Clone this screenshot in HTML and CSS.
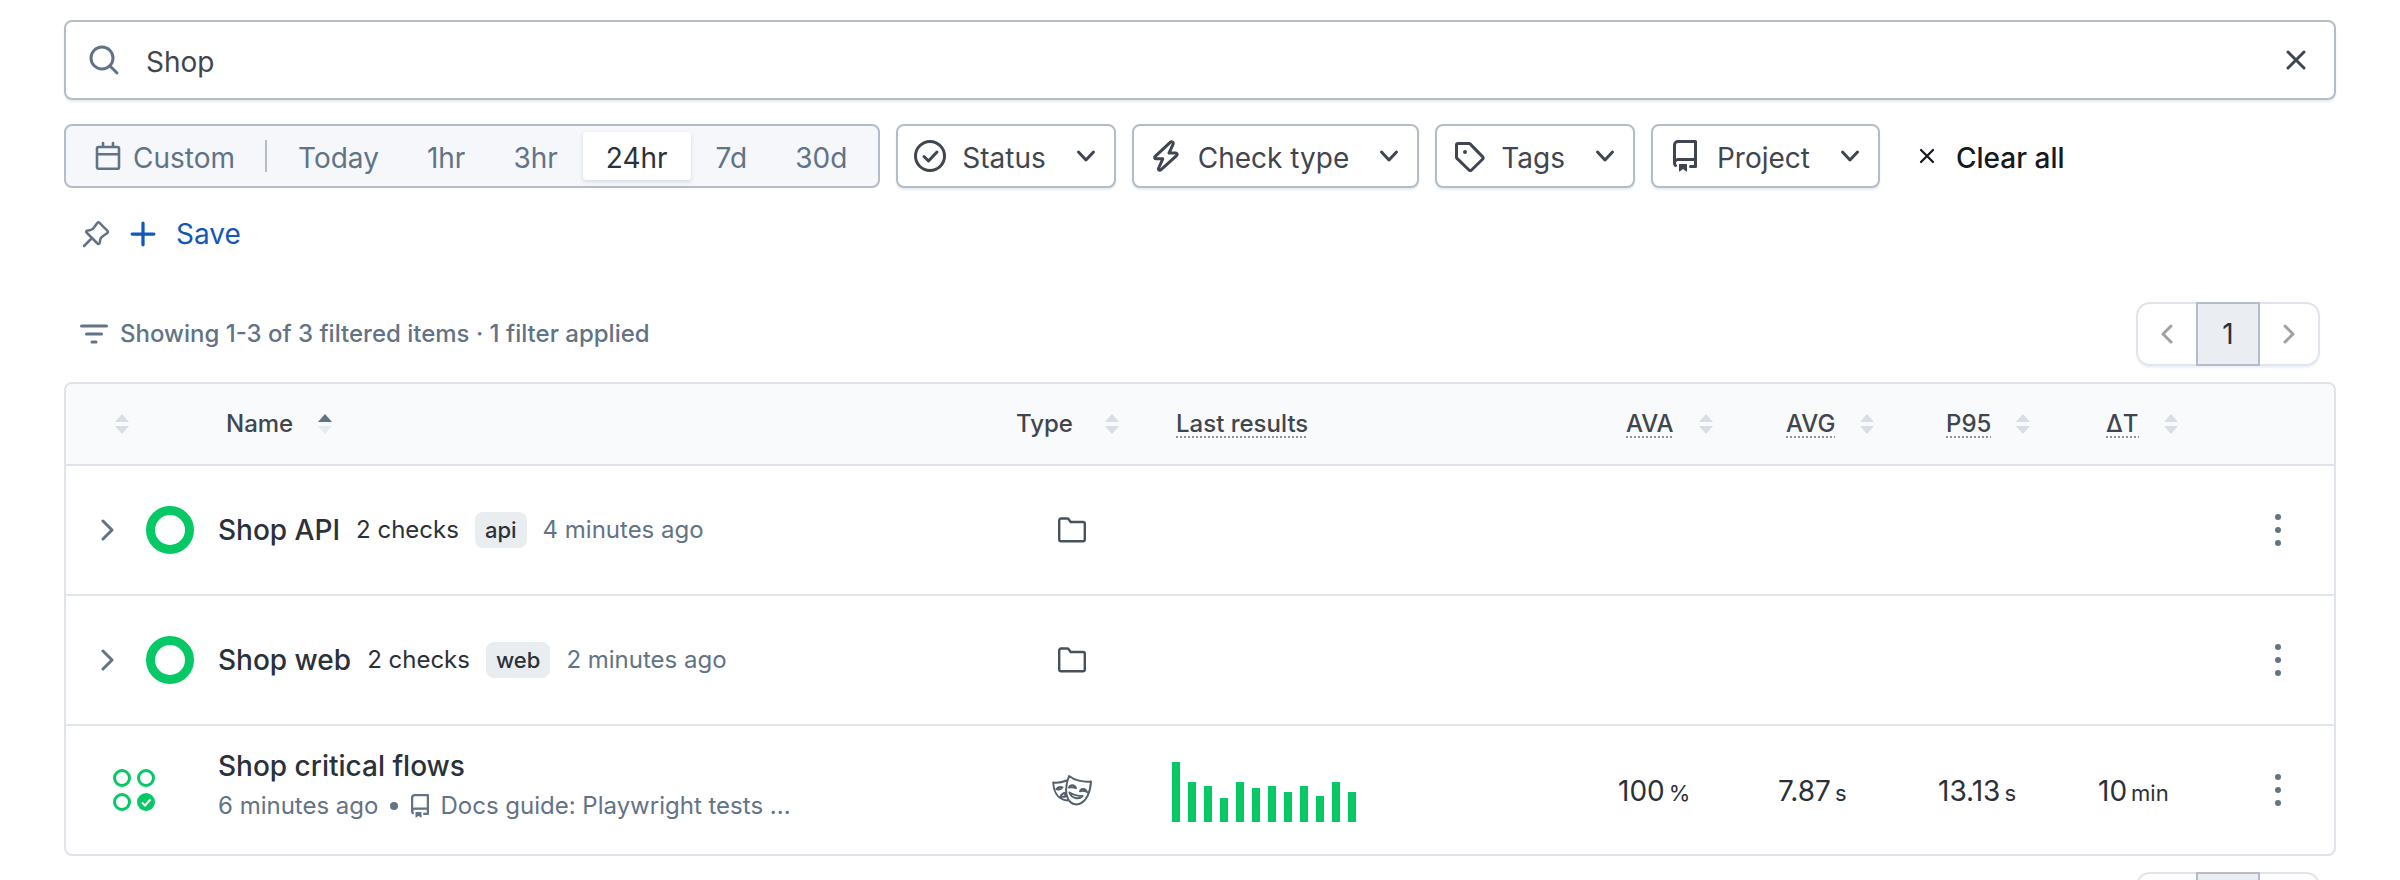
FILE: index.html
```html
<!DOCTYPE html>
<html lang="en">
<head>
<meta charset="utf-8">
<title>Checks</title>
<link rel="stylesheet" href="styles.css">
</head>
<body>
<svg class="defs" aria-hidden="true">
  <symbol id="repo" viewBox="0 0 16 16"><path fill="currentColor" d="M2 2.5A2.5 2.5 0 0 1 4.5 0h8.75a.75.75 0 0 1 .75.75v12.5a.75.75 0 0 1-.75.75h-2.5a.75.75 0 0 1 0-1.5h1.75v-2h-8a1 1 0 0 0-.714 1.7.75.75 0 1 1-1.072 1.05A2.495 2.495 0 0 1 2 11.5Zm10.5-1h-8a1 1 0 0 0-1 1v6.708A2.486 2.486 0 0 1 4.5 9h8ZM5 12.25a.25.25 0 0 1 .25-.25h3.5a.25.25 0 0 1 .25.25v3.25a.25.25 0 0 1-.4.2l-1.45-1.087a.249.249 0 0 0-.3 0L5.4 15.7a.25.25 0 0 1-.4-.2Z"/></symbol>
  <symbol id="down" viewBox="0 0 32 32"><path d="M8.500 12l7.500 8 7.500-8"/></symbol>
  <symbol id="cross" viewBox="0 0 24 24"><path d="M4 4l16 16M20 4L4 20"/></symbol>
  <symbol id="sort" viewBox="0 0 14 20"><path class="up" d="M7 0L14 8H0z"/><path class="dn" d="M7 20L14 12H0z"/></symbol>
  <symbol id="folder" viewBox="0 0 32 32"><path d="M3.200 25.500V6.300a1.800 1.800 0 0 1 1.800-1.800h6.200c.6 0 1.100.3 1.500.8l1.900 2.700h12.400a1.800 1.800 0 0 1 1.800 1.800V25.500a1.800 1.800 0 0 1-1.800 1.800H5a1.800 1.800 0 0 1-1.800-1.800z"/></symbol>
  <symbol id="dots" viewBox="0 0 8 32"><circle cx="4" cy="3" r="3"/><circle cx="4" cy="16" r="3"/><circle cx="4" cy="29" r="3"/></symbol>
</svg>
<main class="page">
  <form class="search" role="search">
    <svg class="ico search-ico" viewBox="0 0 32 32"><circle cx="14" cy="14" r="11"/><path d="M22 22l7 7"/></svg>
    <input type="text" value="Shop" aria-label="Search checks">
    <button type="button" class="plain" aria-label="Clear search"><svg class="ico clear-ico"><use href="#cross"/></svg></button>
  </form>

  <div class="filters">
    <div class="range" role="group" aria-label="Time range">
      <button type="button" class="seg custom"><svg class="ico cal-ico" viewBox="0 0 26 32"><path d="M3.500 7h19c.8 0 1.500.7 1.500 1.500v18.700c0 .8-.7 1.500-1.500 1.500h-19c-.8 0-1.500-.7-1.500-1.500V8.500C2 7.700 2.700 7 3.500 7zM2 14.200h22M8 3v4M18 3v4"/></svg>Custom</button>
      <span class="divider"></span>
      <button type="button" class="seg">Today</button>
      <button type="button" class="seg">1hr</button>
      <button type="button" class="seg">3hr</button>
      <button type="button" class="seg active" aria-pressed="true">24hr</button>
      <button type="button" class="seg">7d</button>
      <button type="button" class="seg">30d</button>
    </div>
    <button type="button" class="menu"><svg class="ico" viewBox="0 0 32 32"><circle cx="16" cy="16" r="14.500"/><path d="M10 16.500l4.500 4.500L23 12"/></svg>Status<svg class="ico chev"><use href="#down"/></svg></button>
    <button type="button" class="menu"><svg class="ico" viewBox="0 0 32 32"><path d="M20.200 2.300L5.200 16.300c-1 1-.5 2.500.9 2.500h6.700L8.700 28c-.8 1.900 1 3 2.400 1.700L26.600 15.600c1-1 .5-2.500-.9-2.500H19l4-8.800c.8-1.900-1.400-3.300-2.800-2z"/></svg>Check type<svg class="ico chev"><use href="#down"/></svg></button>
    <button type="button" class="menu"><svg class="ico" viewBox="0 0 32 32"><path d="M3.500 5v12.200c0 .5.2.9.5 1.200L16 30c.8.800 1.800.8 2.600 0L29.500 19.200c.8-.8.8-1.800 0-2.600L17.300 4.100a2 2 0 0 0-1.500-.6H5A1.500 1.500 0 0 0 3.500 5z"/><circle class="dot" cx="12" cy="12" r="2"/></svg>Tags<svg class="ico chev"><use href="#down"/></svg></button>
    <button type="button" class="menu"><svg class="ico solid"><use href="#repo"/></svg>Project<svg class="ico chev"><use href="#down"/></svg></button>
    <button type="button" class="clear-all"><svg class="ico"><use href="#cross"/></svg>Clear all</button>
  </div>

  <div class="saved">
    <button type="button" class="plain pin" aria-label="Pin filter"><svg class="ico" viewBox="0 0 28 28"><path d="M2 26l8-8M4.500 12.500l11 11c1 1 2.200.2 2.300-.8.300-4 .7-4.700 3-6.500l4.500-3.200c.9-.7.900-1.500.2-2.200l-8-8c-.7-.7-1.500-.7-2.200.2L12 7.500c-1.700 2.300-2.500 2.700-6.500 3-1.100.1-1.900 1.100-1 2z"/></svg></button>
    <button type="button" class="plain save"><svg class="ico" viewBox="0 0 24 24"><path d="M12 2v20M2 12h20"/></svg>Save</button>
  </div>

  <div class="summary">
    <p><svg class="ico" viewBox="0 0 28 24"><path d="M1.500 4h25M6.500 12h15M12 20h4"/></svg>Showing 1-3 of 3 filtered items · 1 filter applied</p>
    <nav class="pager" aria-label="Pages">
      <button type="button" aria-label="Previous page"><svg class="ico" viewBox="0 0 12 20"><path d="M10 2l-8 8 8 8"/></svg></button>
      <button type="button" class="current" aria-current="page">1</button>
      <button type="button" aria-label="Next page"><svg class="ico" viewBox="0 0 12 20"><path d="M2 2l8 8-8 8"/></svg></button>
    </nav>
  </div>

  <div class="card">
    <table>
      <colgroup><col class="c-status"><col><col class="c-std"><col class="c-results"><col class="c-std"><col class="c-std"><col class="c-std"><col class="c-std"><col class="c-menu"></colgroup>
      <thead>
        <tr>
          <th class="first" aria-label="Status"><svg class="sort"><use href="#sort"/></svg></th>
          <th><span class="head">Name<svg class="sort asc"><use href="#sort"/></svg></span></th>
          <th><span class="head wide">Type<svg class="sort"><use href="#sort"/></svg></span></th>
          <th><span class="head"><span class="hint">Last results</span></span></th>
          <th><span class="head"><span class="hint">AVA</span><svg class="sort"><use href="#sort"/></svg></span></th>
          <th><span class="head"><span class="hint">AVG</span><svg class="sort"><use href="#sort"/></svg></span></th>
          <th><span class="head"><span class="hint">P95</span><svg class="sort"><use href="#sort"/></svg></span></th>
          <th><span class="head"><span class="hint">ΔT</span><svg class="sort"><use href="#sort"/></svg></span></th>
          <th aria-label="Actions"></th>
        </tr>
      </thead>
      <tbody>
        <tr>
          <td class="first"><div class="group"><button type="button" class="plain" aria-label="Expand Shop API"><svg class="ico expand" viewBox="0 0 14 22"><path d="M3 2l9 9-9 9"/></svg></button><span class="ring"></span></div></td>
          <td><div class="title"><a href="#">Shop API</a><span>2 checks</span><span class="tag">api</span><span class="muted">4 minutes ago</span></div></td>
          <td class="center"><svg class="ico type-ico"><use href="#folder"/></svg></td>
          <td></td><td></td><td></td><td></td><td></td>
          <td class="center actions"><button type="button" class="plain" aria-label="Actions"><svg class="kebab"><use href="#dots"/></svg></button></td>
        </tr>
        <tr>
          <td class="first"><div class="group"><button type="button" class="plain" aria-label="Expand Shop web"><svg class="ico expand" viewBox="0 0 14 22"><path d="M3 2l9 9-9 9"/></svg></button><span class="ring"></span></div></td>
          <td><div class="title"><a href="#">Shop web</a><span>2 checks</span><span class="tag">web</span><span class="muted">2 minutes ago</span></div></td>
          <td class="center"><svg class="ico type-ico"><use href="#folder"/></svg></td>
          <td></td><td></td><td></td><td></td><td></td>
          <td class="center actions"><button type="button" class="plain" aria-label="Actions"><svg class="kebab"><use href="#dots"/></svg></button></td>
        </tr>
        <tr>
          <td class="first check"><svg class="states" viewBox="0 0 44 44"><circle cx="10" cy="10" r="7.500"/><circle cx="34" cy="10" r="7.500"/><circle cx="10" cy="34" r="7.500"/><circle class="full" cx="34" cy="34" r="9"/><path d="M30 34.500l3 3 5.500-6"/></svg></td>
          <td class="stack"><div class="title"><a href="#">Shop critical flows</a></div><div class="meta">6 minutes ago<span class="bullet"></span><svg class="ico solid"><use href="#repo"/></svg>Docs guide: Playwright tests ...</div></td>
          <td class="center"><svg class="ico masks" viewBox="0 0 40 32"><path d="M17 2c5 4 14 6.500 22 5.500-.5 9-4 22-14.500 23C14 30 11.500 16 17 2zM14.500 6.500C10 8.500 5.500 9 1.200 8.500 1.500 15 4 25.500 15.500 26.500M4.500 15c2 .8 4.500.4 6-1.500-2-.7-4.600-.2-6 1.500zM8.500 22.500c1-2.500 2.800-3.500 4.700-3.800v4zM17 13.500c1.200-3.200 5.500-3.200 7 .6-2-1-4.500-1.200-7-.6zM28 17.200c1-3.200 5.500-3.200 7 .8-2-1.200-4.500-1.400-7-.8zM17.500 18.500c4 2.500 8.500 3.500 13 3.500-3.500 4-11 2.500-13-3.500z"/></svg></td>
          <td class="data"><div class="bars"><i style="height:60px"></i><i style="height:40px"></i><i style="height:36px"></i><i style="height:24px"></i><i style="height:40px"></i><i style="height:34px"></i><i style="height:36px"></i><i style="height:30px"></i><i style="height:36px"></i><i style="height:26px"></i><i style="height:40px"></i><i style="height:30px"></i></div></td>
          <td class="data"><span class="num">100<small>%</small></span></td>
          <td class="data"><span class="num">7.87<small>s</small></span></td>
          <td class="data"><span class="num">13.13<small>s</small></span></td>
          <td class="data"><span class="num">10<small>min</small></span></td>
          <td class="center actions"><button type="button" class="plain" aria-label="Actions"><svg class="kebab"><use href="#dots"/></svg></button></td>
        </tr>
      </tbody>
    </table>
  </div>

  <div class="summary bottom">
    <nav class="pager" aria-label="Pages, bottom">
      <button type="button" aria-label="Previous page"><svg class="ico" viewBox="0 0 12 20"><path d="M10 2l-8 8 8 8"/></svg></button>
      <button type="button" class="current" aria-current="page">1</button>
      <button type="button" aria-label="Next page"><svg class="ico" viewBox="0 0 12 20"><path d="M2 2l8 8-8 8"/></svg></button>
    </nav>
  </div>
</main>
</body>
</html>
```
FILE: styles.css
```css
* { box-sizing: border-box; }

body {
  margin: 0;
  background: #fff;
  color: #2b3139;
  font: 24px/32px Inter, "Liberation Sans", sans-serif;
}

button, input { font: inherit; color: inherit; }
button { display: flex; align-items: center; white-space: nowrap; cursor: pointer; }
a { color: inherit; text-decoration: none; }
p { margin: 0; }

.page { padding: 20px 64px 16px; }
.defs { position: absolute; width: 0; height: 0; }
.plain { padding: 0; border: 0; background: none; }

.ico {
  flex: none;
  width: 32px;
  height: 32px;
  fill: none;
  stroke: currentColor;
  stroke-width: 3;
  stroke-linecap: round;
  stroke-linejoin: round;
}
.ico.solid { stroke: none; }
.ico .dot { fill: currentColor; stroke: none; }

/* Search */
.search {
  display: flex;
  align-items: center;
  height: 80px;
  padding: 0 26px 0 22px;
  border: 2px solid #b3bcc7;
  border-radius: 8px;
  box-shadow: 0 2px 2px #e8ecf2;
  color: #3f464f;
  font-size: 28px;
}
.search input { flex: 1; min-width: 0; height: 60px; padding: 4px 0 0 26px; border: 0; outline: 0; background: none; }
.search-ico { color: #627386; }
.clear-ico { width: 24px; height: 24px; }

/* Filters */
.filters { display: flex; gap: 16px; margin-top: 24px; font-size: 28px; }
.range {
  display: flex;
  align-items: center;
  gap: 2px;
  height: 64px;
  padding: 0 8px 0 6px;
  border: 2px solid #b3bcc7;
  border-radius: 8px;
  background: #f5f7fa;
}
.seg { height: 48px; padding: 4px 23px 0; border: 0; border-radius: 4px; background: none; color: #627386; }
.seg.active { background: #fff; color: #2b3139; box-shadow: 0 2px 4px #d5dae1; }
.custom { gap: 12px; padding-right: 28px; }
.cal-ico { width: 26px; margin-top: -4px; stroke-width: 2.6; }
.divider { width: 2px; height: 32px; margin-right: 6px; background: #b3bcc7; }

.menu {
  height: 64px;
  padding: 4px 12px 0 16px;
  border: 2px solid #b3bcc7;
  border-radius: 8px;
  background: #fff;
  box-shadow: 0 2px 2px #e8ecf2;
  color: #3f464f;
}
.menu .ico { margin: -4px 16px 0 0; }
.menu .chev { margin: -4px 0 0 24px; }
.clear-all { gap: 20px; padding: 4px 22px 0; border: 0; background: none; color: #16191d; font-weight: 500; }
.clear-all .ico { width: 18px; height: 18px; margin-top: -4px; }

.saved { display: flex; align-items: center; gap: 20px; height: 48px; margin-top: 22px; padding-left: 18px; font-size: 28px; }
.pin { color: #627386; }
.pin .ico { width: 28px; height: 28px; stroke-width: 2.500; }
.save { gap: 20px; color: #1158b8; }
.save .ico { width: 26px; height: 26px; }

/* Summary and pager */
.summary {
  display: flex;
  align-items: center;
  justify-content: space-between;
  margin-top: 44px;
  padding: 0 16px;
  color: #627386;
  font-weight: 500;
}
.summary p { display: flex; align-items: center; gap: 12px; }
.summary p .ico { width: 28px; height: 24px; }
.bottom { justify-content: flex-end; margin-top: 16px; }
.pager { display: flex; border-radius: 14px; box-shadow: 0 2px 2px #eef1f5; }
.pager button {
  justify-content: center;
  width: 60px;
  height: 64px;
  padding: 0;
  border: 2px solid #e1e5eb;
  background: #fff;
  color: #a0a0a0;
}
.pager button:first-child { border-right: 0; border-radius: 14px 0 0 14px; }
.pager button:last-child { border-left: 0; border-radius: 0 14px 14px 0; }
.pager .current { width: 64px; border-color: #b3bcc7; background: #eaedf2; color: #2b3139; font-size: 28px; font-weight: 400; }
.pager .ico { width: 12px; height: 20px; }

/* Table */
.card { margin-top: 16px; border: 2px solid #dfe4ea; border-radius: 8px; overflow: hidden; }
table { width: 100%; table-layout: fixed; border-collapse: separate; border-spacing: 0; }
.c-status { width: 136px; }
.c-std { width: 160px; }
.c-results { width: 450px; }
.c-menu { width: 92px; }

th { height: 82px; padding: 0 16px; background: #f9fafc; border-bottom: 2px solid #dfe4ea; color: #3f464f; font-weight: 500; text-align: left; }
th.first { padding: 0 0 0 49px; }
.head { display: flex; align-items: center; gap: 25px; padding-left: 8px; }
.head.wide { gap: 32px; }
.hint { background: repeating-linear-gradient(90deg, #8b939e 0 2px, transparent 2px 4px) 0 calc(100% - 2px) / 100% 2px no-repeat; }
.sort { display: block; flex: none; width: 14px; height: 20px; fill: #d9dde4; }
.sort.asc { --up: #627386; fill: #e6e9ed; }
.up { fill: var(--up, #d9dde4); }

td { height: 130px; padding: 0 16px; border-bottom: 2px solid #e1e4e8; }
tr:last-child td { height: 128px; border-bottom: 0; }
td.center { text-align: center; }
td.center svg, td.center button { display: block; margin: 0 auto; }
td.actions { padding: 0 20px 0 0; }
td.first { padding: 0 0 0 34px; }
td.check { padding-left: 46px; }
td.stack { padding-bottom: 8px; }
td.data { padding-top: 4px; }

.group { display: flex; align-items: center; gap: 32px; }
.expand { display: block; width: 14px; height: 22px; color: #627386; }
.ring { width: 48px; height: 48px; border: 9px solid #06c865; border-radius: 50%; }
.title { display: flex; align-items: center; gap: 16px; white-space: nowrap; }
.title a { font-size: 28px; font-weight: 500; }
.tag { height: 36px; padding: 0 10px; border-radius: 8px; background: #eaedf0; font-size: 22px; font-weight: 500; line-height: 36px; }
.muted { color: #627386; }
.meta { display: flex; align-items: center; margin-top: 8px; color: #627386; white-space: nowrap; }
.meta .ico { width: 24px; height: 24px; margin-right: 8px; }
.bullet { width: 8px; height: 8px; margin: 0 10px 0 12px; border-radius: 50%; background: #627386; }
.type-ico { color: #48525f; stroke-width: 2.400; }
.masks { width: 40px; height: 32px; color: #56616e; stroke-width: 2; }
.states { display: block; width: 44px; height: 44px; fill: none; stroke: #06c865; stroke-width: 3; }
.states .full { fill: #06c865; stroke: none; }
.states path { stroke: #fff; stroke-width: 2; }
.bars { display: flex; align-items: flex-end; gap: 8px; padding-left: 4px; }
.bars i { width: 8px; background: #06c865; }
.num { display: flex; align-items: baseline; gap: 4px; font-size: 28px; }
.num small { font-size: 22px; }
.kebab { width: 8px; height: 32px; fill: #627386; }
```
